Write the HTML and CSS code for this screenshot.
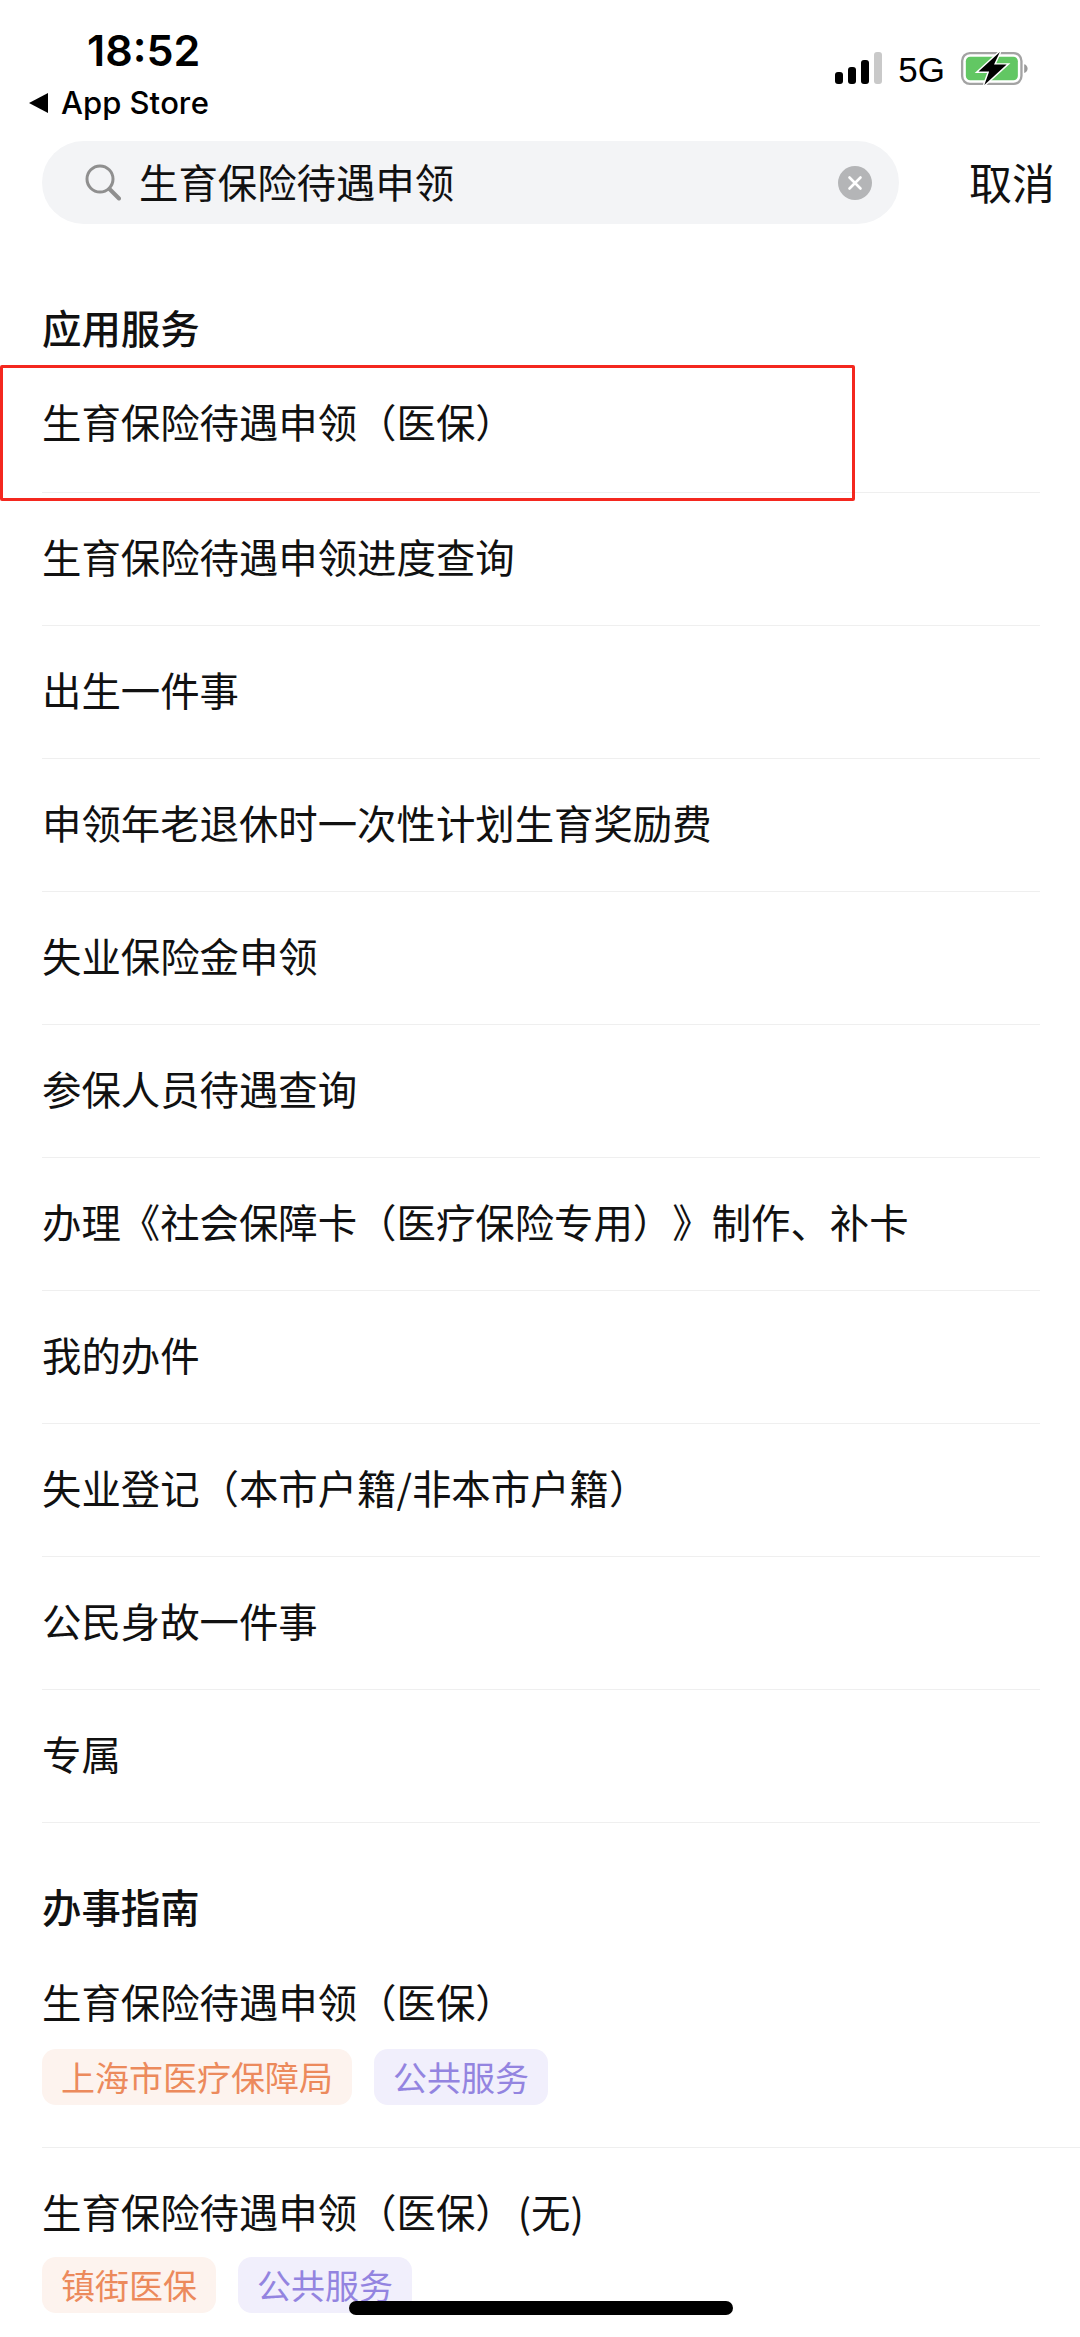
FILE: index.html
```html
<!DOCTYPE html>
<html lang="zh-CN">
<head>
<meta charset="utf-8">
<title>搜索</title>
<link rel="stylesheet" href="styles.css">
</head>
<body>
<div class="page">
  <header class="status">
    <div class="status-left">
      <div class="time">18:52</div>
      <div class="back"><svg class="back-arrow" viewBox="0 0 20 20"><path d="M0 10 19 0V20Z"/></svg>App Store</div>
    </div>
    <div class="status-right">
      <svg class="signal" viewBox="0 0 47 32"><rect x="0" y="20" width="8" height="12" rx="3"/><rect x="13" y="15" width="8" height="17" rx="3"/><rect x="26" y="8" width="8" height="24" rx="3"/><rect x="39" y="0" width="8" height="32" rx="3" fill="#c9c9c9"/></svg>
      <span class="net">5G</span>
      <svg class="battery" viewBox="0 0 70 36"><rect x="1.2" y="2.2" width="61" height="31.6" rx="8" fill="none" stroke="#a3a3a3" stroke-width="2.4"/><rect x="5" y="6" width="53.500" height="24" rx="4.500" fill="#62c763"/><path d="M65 13.500c2.500.5 3.500 2.500 3.500 4.500s-1 4-3.500 4.500Z" fill="#9a9a9a"/><path class="bolt" d="M40 1 18 21h11l-5 14 23-21H34Z"/></svg>
    </div>
  </header>

  <div class="search-row">
    <div class="search">
      <svg class="search-icon" viewBox="0 0 36 37"><circle cx="15" cy="15" r="13" fill="none" stroke="#8f8f8f" stroke-width="3"/><path d="M24.500 25 34 34.500" stroke="#8f8f8f" stroke-width="4" stroke-linecap="round"/></svg>
      <span class="query">生育保险待遇申领</span>
      <svg class="clear" viewBox="0 0 34 34"><circle cx="17" cy="17" r="17" fill="#b4b5b7"/><path d="M11.500 11.500 22.500 22.500M22.500 11.500 11.500 22.500" stroke="#fff" stroke-width="2.600" stroke-linecap="round"/></svg>
    </div>
    <span class="cancel">取消</span>
  </div>

  <section class="services">
    <h2 class="section-title service-title">应用服务</h2>
    <ul class="list">
      <li class="row highlight">生育保险待遇申领（医保）</li>
      <li class="row">生育保险待遇申领进度查询</li>
      <li class="row">出生一件事</li>
      <li class="row">申领年老退休时一次性计划生育奖励费</li>
      <li class="row">失业保险金申领</li>
      <li class="row">参保人员待遇查询</li>
      <li class="row">办理《社会保障卡（医疗保险专用）》制作、补卡</li>
      <li class="row">我的办件</li>
      <li class="row">失业登记（本市户籍/非本市户籍）</li>
      <li class="row">公民身故一件事</li>
      <li class="row">专属</li>
    </ul>
  </section>

  <section class="guides">
    <h2 class="section-title guide-title">办事指南</h2>
    <article class="guide">
      <div class="guide-name">生育保险待遇申领（医保）</div>
      <div class="tags"><span class="tag tag-orange">上海市医疗保障局</span><span class="tag tag-purple">公共服务</span></div>
    </article>
    <article class="guide">
      <div class="guide-name">生育保险待遇申领（医保）<span class="suffix">(无)</span></div>
      <div class="tags"><span class="tag tag-orange">镇街医保</span><span class="tag tag-purple">公共服务</span></div>
    </article>
  </section>

  <div class="home-indicator"></div>
</div>
</body>
</html>
```
FILE: styles.css
```css
* { box-sizing: border-box; }
html, body { margin: 0; padding: 0; background: #fff; }
body { font-family: "Noto Sans CJK SC", "Noto Sans", sans-serif; color: #111; text-spacing-trim: space-all; font-kerning: none; }
.page { position: relative; width: 1080px; height: 2337px; overflow: hidden; background: #fff; }

.status { height: 141px; display: flex; justify-content: space-between; font-family: Inter, "Liberation Sans", sans-serif; color: #000; }
.status-left { padding: 24px 0 0 29px; }
.time { padding-left: 58px; font-size: 43px; line-height: 52px; font-weight: 600; font-kerning: normal; }
.back { display: flex; align-items: center; margin-top: 9px; font-size: 31px; line-height: 36px; font-weight: 500; }
.back-arrow { width: 20px; height: 20px; margin-right: 12px; fill: #000; }
.status-right { display: flex; align-items: center; height: 36px; margin: 50px 50px 0 0; }
.signal { width: 47px; height: 32px; fill: #000; }
.net { margin: 4px 0 0 16px; font-size: 35px; font-family: "Liberation Sans", sans-serif; }
.battery { width: 70px; height: 35px; margin-left: 15px; overflow: visible; }
.bolt { fill: #000; stroke: #fff; stroke-width: 3px; paint-order: stroke; }

.search-row { display: flex; align-items: center; padding-left: 42px; }
.search { width: 857px; height: 83px; display: flex; align-items: center; padding: 0 27px 0 43px; background: #f3f4f6; border-radius: 42px; }
.search-icon { width: 36px; height: 37px; flex: none; }
.query { flex: 1; margin: 0 0 4px 18px; font-size: 39.4px; line-height: 50px; }
.clear { width: 34px; height: 34px; flex: none; }
.cancel { margin: 0 0 3px 70px; font-size: 43px; line-height: 60px; white-space: nowrap; }

.section-title { margin: 0; padding-left: 42px; font-size: 39.4px; line-height: 56px; font-weight: 500; }
.services { padding-top: 75px; }
.service-title { margin-bottom: 1px; }
.list { list-style: none; margin: 0; padding: 0; }
.row { display: flex; align-items: center; height: 133px; margin: 0 40px 0 42px; font-size: 39.4px; line-height: 56px; border-bottom: 1.500px solid #efefef; padding-bottom: 6px; }
.highlight { position: relative; height: 137px; }
.highlight::before { content: ""; box-sizing: border-box; position: absolute; left: -42px; top: 9px; width: 855px; height: 136px; border: 3px solid #f4281f; border-radius: 2px; }

.guides { padding-top: 55px; }
.guide { margin: 0 0 0 42px; border-bottom: 1.500px solid #efefef; }
.guide:last-child { border-bottom: 0; }
.guide-title { margin-bottom: 39px; }
.guide-name { font-size: 39.4px; line-height: 56px; }
.suffix { margin-left: 3px; }
.tags { display: flex; gap: 22px; margin-top: 20px; padding-bottom: 42px; }
.guide + .guide { padding-top: 35px; }
.guide + .guide .tags { margin-top: 18px; }
.tag { height: 56px; display: flex; align-items: center; padding: 0 19px; font-size: 34px; line-height: 48px; border-radius: 14px; }
.tag-orange { background: #fdf3ee; color: #ec8a5c; }
.tag-purple { background: #f1effc; color: #9384e0; }

.home-indicator { position: absolute; left: 349px; top: 2301px; width: 384px; height: 14px; background: #000; border-radius: 7px; }
```
